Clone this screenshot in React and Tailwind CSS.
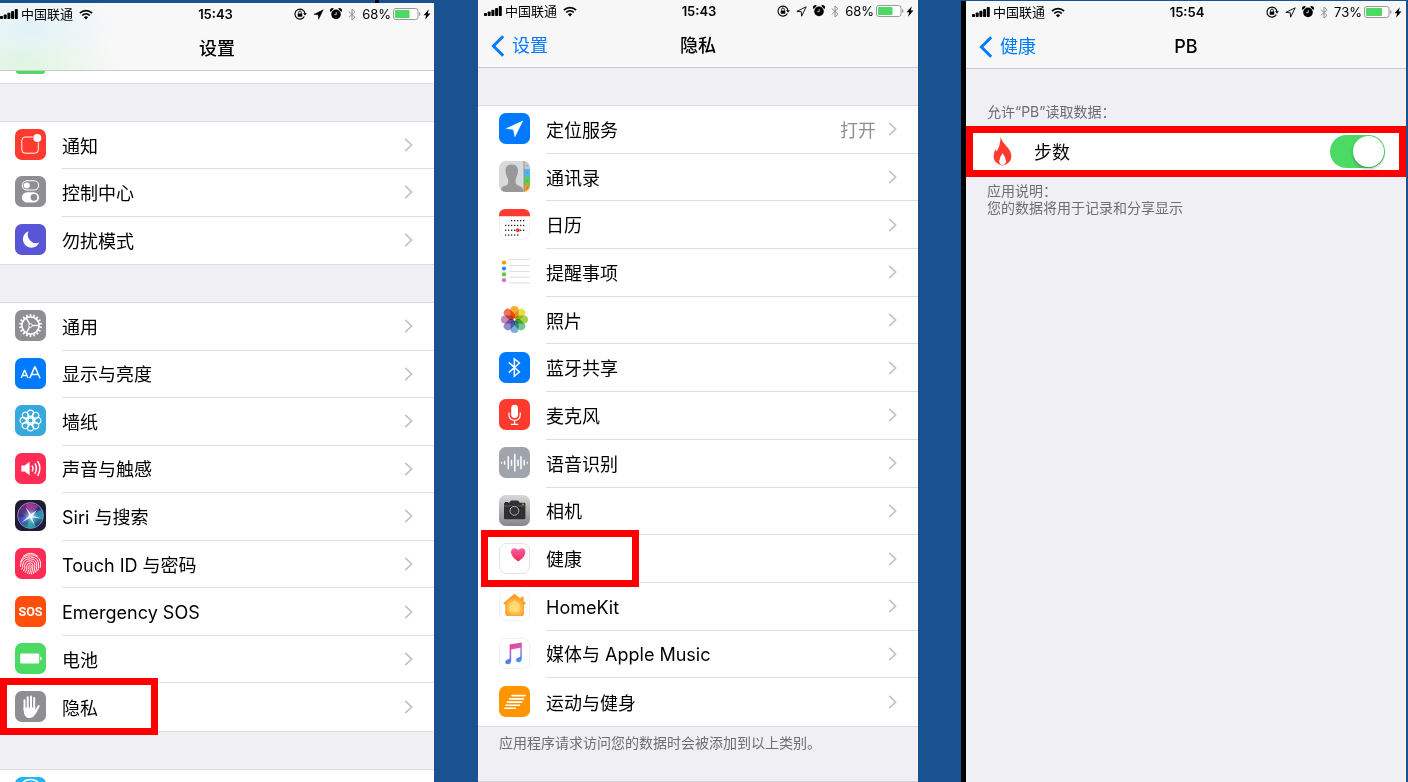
import React from "react";

/* ---------- status bar glyphs ---------- */

const Signal = () => (
  <svg width="18" height="12" viewBox="0 0 18 12" aria-hidden="true">
    <rect x="0" y="8" width="3" height="3" rx="0.8" />
    <rect x="3.7" y="6.5" width="3" height="4.5" rx="0.8" />
    <rect x="7.4" y="4.8" width="3" height="6.2" rx="0.8" />
    <rect x="11.1" y="3" width="3" height="8" rx="0.8" />
    <rect x="14.8" y="1" width="3" height="10" rx="0.8" />
  </svg>
);

const Wifi = () => (
  <svg width="14" height="11" viewBox="0 0 14 11" fill="none" stroke="#000" strokeWidth="1.7" aria-hidden="true">
    <path d="M0.9 4.2C4.4 0.7 9.6 0.7 13.1 4.2" />
    <path d="M3.2 6.5C5.4 4.4 8.6 4.4 10.8 6.5" />
    <path d="M4.9 8.2C6.1 7 7.9 7 9.1 8.2L7 10.4Z" fill="#000" stroke="none" />
  </svg>
);

const RotationLock = () => (
  <svg width="13" height="12" viewBox="0 0 13 12" fill="none" stroke="#000" aria-hidden="true">
    <path d="M10.4 8.6A5 5 0 1 1 11 5.6" strokeWidth="1.1" />
    <path d="M9 5.2H13L11 7.6Z" fill="#000" stroke="none" />
    <rect x="3.7" y="5.4" width="4.6" height="3.3" rx="0.4" fill="#000" stroke="none" />
    <path d="M4.6 5.6V4.4a1.4 1.4 0 0 1 2.8 0V5.6" strokeWidth="0.9" />
  </svg>
);

const StatusArrow = ({ solid }) => (
  <svg width="11" height="11" viewBox="0 0 11 11" aria-hidden="true">
    <path
      d="M10.2 0.8L0.9 5.4L5.3 5.7L5.6 10.2Z"
      fill={solid ? "#000" : "none"}
      stroke="#000"
      strokeWidth={solid ? "0.5" : "0.9"}
      strokeLinejoin="round"
    />
  </svg>
);

const Alarm = () => (
  <svg width="12" height="12" viewBox="0 0 12 12" aria-hidden="true">
    <circle cx="6" cy="6.4" r="4.8" />
    <path d="M0.7 4A2.1 2.1 0 0 1 3.9 0.8ZM11.3 4A2.1 2.1 0 0 0 8.1 0.8Z" />
    <path d="M6.2 4.2V6.7H4.4" stroke="#fff" strokeWidth="0.8" fill="none" />
  </svg>
);

const StatusBluetooth = () => (
  <svg width="8" height="13" viewBox="0 0 8 13" fill="none" stroke="#8e8e93" strokeWidth="1" aria-hidden="true">
    <path d="M0.8 3.6L7 9.3L4 12V1L7 3.7L0.8 9.4" />
  </svg>
);

const Battery = ({ level }) => (
  <svg width="28" height="12" viewBox="0 0 28 12" aria-hidden="true">
    <rect x="0.5" y="0.5" width="24.5" height="11" rx="2.4" fill="#fff" stroke="#8f8f8f" strokeWidth="0.9" />
    <rect x="2" y="2" width={level} height="8" rx="0.8" fill="#4cd964" />
    <path d="M26.2 4V8Q27.5 7.4 27.5 6Q27.5 4.6 26.2 4Z" fill="#8f8f8f" />
  </svg>
);

const Bolt = () => (
  <svg width="8" height="11" viewBox="0 0 8 11" aria-hidden="true">
    <path d="M5.8 0.2L0.6 6.3H3.2L2 10.8L7.5 4.5H4.8Z" />
  </svg>
);

function StatusBar({ time, percent, level, solidArrow, pad }) {
  return (
    <div className={`grid h-[22px] grid-cols-[1fr_auto_1fr] items-center text-[13px] leading-none text-black ${pad}`}>
      <div className="flex items-center whitespace-nowrap">
        <Signal />
        <span className="ml-[3px] mr-[6px]">中国联通</span>
        <Wifi />
      </div>
      <time className="font-semibold">{time}</time>
      <div className="flex items-center justify-end">
        <div className="mr-[6px] flex items-center gap-[6px]">
          <RotationLock />
          <StatusArrow solid={solidArrow} />
          <Alarm />
          <StatusBluetooth />
        </div>
        <span className="mr-[2px]">{percent}</span>
        <Battery level={level} />
        <span className="ml-[2px]">
          <Bolt />
        </span>
      </div>
    </div>
  );
}

function NavBar({ title, back }) {
  return (
    <div className="grid h-[46px] grid-cols-[1fr_auto_1fr] items-center border-b border-[#c9c9ce] pt-0.5 text-[18px]">
      <div className="flex">
        {back && (
          <a href="#back" className="flex items-center gap-[7px] pl-[13px] text-[#007aff]">
            <svg width="14" height="22" viewBox="0 0 14 22" fill="none" stroke="currentColor" strokeWidth="3" aria-hidden="true">
              <path d="M12.2 1.2L2.4 11L12.2 20.8" />
            </svg>
            {back}
          </a>
        )}
      </div>
      <h1 className="font-medium text-black">{title}</h1>
      <div />
    </div>
  );
}

/* ---------- app icons ---------- */

const Tile = ({ fill, stroke, children }) => (
  <svg className="mb-0.5 shrink-0" width="31" height="31" viewBox="0 0 31 31" aria-hidden="true">
    <rect
      x={stroke ? 0.5 : 0}
      y={stroke ? 0.5 : 0}
      width={stroke ? 30 : 31}
      height={stroke ? 30 : 31}
      rx="6.8"
      fill={fill}
      stroke={stroke || "none"}
    />
    {children}
  </svg>
);

const NotificationsIcon = () => (
  <Tile fill="#ff3b30">
    <path d="M17.8 8H10.2Q6.8 8 6.8 11.4V20.8Q6.8 24.2 10.2 24.2H19.9Q23.3 24.2 23.3 20.8V13.4" fill="none" stroke="#fff" strokeWidth="1" />
    <circle cx="22.3" cy="9" r="4" fill="#fff" />
  </Tile>
);

const ControlCenterIcon = () => (
  <Tile fill="#8e8e93">
    <rect x="7.4" y="4.8" width="16.2" height="9.2" rx="4.6" fill="none" stroke="#fff" strokeWidth="1.1" />
    <circle cx="11.8" cy="9.4" r="3" fill="#fff" />
    <rect x="6.9" y="16.2" width="17.2" height="10.4" rx="5.2" fill="#fff" />
    <circle cx="18.9" cy="21.4" r="3.3" fill="#8e8e93" />
  </Tile>
);

const MoonIcon = () => (
  <Tile fill="#5856d6">
    <path d="M13.6 7.2A8.5 8.5 0 1 0 24.2 18.6A8.4 8.4 0 0 1 13.6 7.2Z" fill="#fff" />
  </Tile>
);

const GearIcon = () => (
  <Tile fill="#8e8e93">
    <g fill="none" stroke="#fff">
      <circle cx="15.5" cy="15.5" r="8.6" strokeWidth="1.6" />
      <g strokeWidth="1.7">
        {Array.from({ length: 18 }, (_, i) => (
          <path key={i} d="M15.5 4V6.8" transform={`rotate(${i * 20} 15.5 15.5)`} />
        ))}
      </g>
      <path d="M15.5 15.5H24M15.5 15.5L11.2 8.1M15.5 15.5L11.2 22.9" strokeWidth="1.4" />
      <circle cx="15.5" cy="15.5" r="1.8" strokeWidth="1" fill="#8e8e93" />
    </g>
  </Tile>
);

const DisplayIcon = () => (
  <Tile fill="#007aff">
    <g fill="none" stroke="#fff" strokeLinejoin="bevel">
      <path d="M6.2 20L9.6 12L13 20M7.4 17.5H11.8" strokeWidth="1.4" />
      <path d="M14.7 20.2L19.9 8.6L25.1 20.2M16.5 16.6H23.3" strokeWidth="1.5" />
    </g>
  </Tile>
);

const WallpaperIcon = () => (
  <Tile fill="#37a9dc">
    <g fill="none" stroke="#fff" strokeWidth="1.1">
      {[0, 45, 90, 135, 180, 225, 270, 315].map((a) => (
        <g key={a} transform={`rotate(${a} 15.5 15.5)`}>
          <circle cx="15.5" cy="8.2" r="3.1" />
          <path d="M15.5 12.9L14 10.6M15.5 12.9L17 10.6" />
        </g>
      ))}
      <circle cx="15.5" cy="15.5" r="2.6" />
    </g>
  </Tile>
);

const SoundIcon = () => (
  <Tile fill="#ff2d55">
    <path d="M6.4 12.6H9.6L14.6 8.8V22.2L9.6 18.4H6.4Z" fill="#fff" />
    <g fill="none" stroke="#fff" strokeWidth="1.5">
      <path d="M17.1 12.6Q18.9 15.5 17.1 18.4" />
      <path d="M19.9 10.4Q23 15.5 19.9 20.6" />
      <path d="M22.6 8.2Q27.2 15.5 22.6 22.8" />
    </g>
  </Tile>
);

const SiriIcon = () => (
  <Tile fill="#1d1b36">
    <defs>
      <radialGradient id="siriCore" cx="0.5" cy="0.52" r="0.5">
        <stop offset="0" stopColor="#ffffff" />
        <stop offset="0.2" stopColor="#bfe6ff" stopOpacity="0.8" />
        <stop offset="0.7" stopColor="#4d7fd0" stopOpacity="0.15" />
        <stop offset="1" stopColor="#1d1b36" stopOpacity="0" />
      </radialGradient>
      <linearGradient id="siriBall" x1="0.2" y1="0" x2="0.7" y2="1">
        <stop offset="0" stopColor="#8a2a80" />
        <stop offset="0.45" stopColor="#33307c" />
        <stop offset="0.75" stopColor="#1f7f98" />
        <stop offset="1" stopColor="#1a3568" />
      </linearGradient>
    </defs>
    <circle cx="15.5" cy="15.5" r="12.9" fill="url(#siriBall)" stroke="#a99cc0" strokeWidth="0.8" />
    <path d="M15.5 16L10.5 4.5Q18 3 23 6.2Z" fill="#e0489b" opacity="0.5" />
    <path d="M15.5 16L26.5 9Q29 14 27 19Z" fill="#3ac6d8" opacity="0.5" />
    <path d="M15.5 16L3.5 17.5Q5 23 8.6 25Z" fill="#5a4be0" opacity="0.7" />
    <path d="M15.5 16L12 27.6Q17 29 21 26.5Z" fill="#38d2b6" opacity="0.6" />
    <circle cx="15.5" cy="16" r="12" fill="url(#siriCore)" opacity="0.8" />
    <path d="M14.2 14.9L10.5 7L16 14L22 10L17.6 15.8L26.4 18.4L17 17.6L19.6 25L15 18L6.5 22.5L13.4 16.5Z" fill="#fff" opacity="0.9" />
  </Tile>
);

const TouchIdIcon = () => (
  <Tile fill="#ff2d55">
    <g fill="none" stroke="#fff" strokeWidth="0.95" strokeLinecap="round">
      <path d="M8.2 8.2Q15.5 2 22.8 8.2" />
      <path d="M5.6 13.8Q7.4 7 15.5 6.8Q23.6 7 25.4 13.8Q25.9 16.6 25.2 19.6" />
      <path d="M5.4 18.6Q5.6 8.8 15.5 8.8Q24 9.2 23.7 18Q23.5 20.3 22.8 22.6" />
      <path d="M6.8 21.4Q8.4 19.4 7.7 17Q8.2 10.8 15.5 10.8Q22.2 11.2 21.8 18Q21.5 21.4 20.6 24.2" />
      <path d="M8.6 23Q10.6 19.8 9.8 17.2Q10.4 12.8 15.5 12.8Q20.2 13 19.9 18Q19.6 22 18.5 25.4" />
      <path d="M10.4 24.4Q12.6 21 11.8 17.6Q12.4 14.8 15.5 14.8Q18.3 15 18 18.2Q17.8 22.4 16.3 26" />
      <path d="M12.6 25.4Q14.4 21.6 13.9 18Q14.4 16.6 15.5 16.7Q16.4 17 16.2 18.6Q16 22.4 14.5 25.9" />
    </g>
  </Tile>
);

const SosIcon = () => (
  <Tile fill="#ff4f0a">
    <text
      x="15.5"
      y="20.2"
      textAnchor="middle"
      fill="#fff"
      fontSize="12.5"
      fontWeight="700"
      fontFamily="Roboto, sans-serif"
    >
      SOS
    </text>
  </Tile>
);

const BatteryIcon = () => (
  <Tile fill="#4cd964">
    <rect x="5.2" y="10.4" width="19" height="10.2" rx="1.2" fill="#fff" />
    <path d="M25.1 13.4Q26.8 14 26.8 15.5Q26.8 17 25.1 17.6Z" fill="#fff" />
  </Tile>
);

const HandIcon = () => (
  <Tile fill="#8e8e93">
    <g fill="none" stroke="#fff" strokeLinecap="round">
      <path d="M9.5 9.2V18" strokeWidth="1.9" />
      <path d="M12.7 6.2V17" strokeWidth="2" />
      <path d="M16 5.4V17" strokeWidth="2" />
      <path d="M19.2 7V18" strokeWidth="2" />
      <path d="M23.6 15.2L20.6 20.8" strokeWidth="2.1" />
    </g>
    <path d="M8.5 16.4H20.2L20.4 18.6L22.4 19Q21 22.6 19.4 24.6Q18 27 14.8 27Q10.8 27 9.4 23.4Q8.5 20.6 8.5 16.4Z" fill="#fff" />
  </Tile>
);

const AppStoreIcon = () => (
  <Tile fill="#1fb6f5">
    <circle cx="15.5" cy="14.5" r="12" fill="none" stroke="#fff" strokeWidth="1.4" />
    <path d="M17 7L10 20M14 7L21 20M8 17H23" stroke="#fff" strokeWidth="1.8" />
  </Tile>
);

const LocationIcon = () => (
  <Tile fill="#007aff">
    <path d="M24.2 7.6L6.6 15.6L14.2 16.8L15.8 24.6Z" fill="#fff" />
  </Tile>
);

const ContactsIcon = () => (
  <Tile fill="#d9d9db">
    <defs>
      <clipPath id="contactsClip">
        <rect width="31" height="31" rx="6.8" />
      </clipPath>
    </defs>
    <g clipPath="url(#contactsClip)">
      <path d="M12.8 3.4Q18.6 3.4 19 9Q19.2 13 17.4 16.2Q16.2 18.4 16.8 22.4Q17.6 24.2 21 25.2Q24 26 24.4 31H1.6Q1.8 26.4 4.6 25.2Q8.6 24.2 9.2 22.2Q9.6 18.4 8.2 16.2Q6.4 13 6.5 9Q6.8 3.4 12.8 3.4Z" fill="#98989a" />
      <rect x="25" y="0" width="6" height="8" fill="#c9c9cc" />
      <rect x="25" y="8" width="6" height="8" fill="#50b4f2" />
      <rect x="25" y="16" width="6" height="8" fill="#5fce4f" />
      <rect x="25" y="24" width="6" height="7" fill="#f8961f" />
      <path d="M25 0V31" stroke="#8a8a8d" strokeWidth="0.8" />
      <path d="M28 4.4V5.4M28 11.4V12.4M28 19.4V20.4M28 26.4V27.4" stroke="#6a6a6c" strokeWidth="1" />
    </g>
  </Tile>
);

const calendarRows = [
  [12, 15, 18, 21, 24],
  [6, 9, 12, 15, 18, 21, 24],
  [6, 9, 12, 15, 18, 21, 24],
  [6, 9, 12, 15, 18],
];

const CalendarIcon = () => (
  <Tile fill="#fff" stroke="#f2f2f2">
    <path d="M0 7.2V6.8Q0 0 6.8 0H24.2Q31 0 31 6.8V7.2Z" fill="#ff3b30" />
    {calendarRows.map((xs, r) =>
      xs.map((x) => <rect key={`${r}-${x}`} x={x} y={11 + r * 4.8} width="1.3" height="1.3" fill="#222" />)
    )}
    <circle cx="18.8" cy="21.2" r="2" fill="#ff3b30" />
  </Tile>
);

const RemindersIcon = () => (
  <Tile fill="#fff">
    <path d="M10 3.5H31M10 9.5H31M10 15.4H31M10 21.2H31M10 27H31" stroke="#d5d5d7" strokeWidth="0.8" />
    <circle cx="5" cy="6.6" r="2.1" fill="#ff9500" />
    <circle cx="5" cy="12.5" r="2.1" fill="#1d8cf5" />
    <circle cx="5" cy="18.4" r="2.1" fill="#5ecb2f" />
    <circle cx="5" cy="24.2" r="2.1" fill="#cb73e1" />
  </Tile>
);

const petals = ["#f8a01c", "#e4dc30", "#9ccb3b", "#5fbf86", "#6aa5dc", "#8d7cc4", "#c07ab8", "#f0603f"];

const PhotosIcon = () => (
  <Tile fill="#fff">
    <g className="isolate">
      {petals.map((c, i) => (
        <rect
          key={c}
          className="mix-blend-multiply"
          x="11.4"
          y="2"
          width="8.2"
          height="12.6"
          rx="4.1"
          fill={c}
          fillOpacity="0.9"
          transform={`rotate(${i * 45} 15.5 15.5)`}
        />
      ))}
    </g>
  </Tile>
);

const BluetoothIcon = () => (
  <Tile fill="#007aff">
    <path d="M9.8 10.4L20.4 20L15.3 24.2V6.8L20.4 11L9.8 20.6" fill="none" stroke="#fff" strokeWidth="1.5" />
  </Tile>
);

const MicIcon = () => (
  <Tile fill="#ff3b30">
    <rect x="12.2" y="5.8" width="6.8" height="13.2" rx="3.4" fill="#fff" />
    <path d="M10 13.6V16Q10.2 21.2 15.6 21.4Q21 21.2 21.2 16V13.6M15.6 21.4V25M12 25.3H19.2" fill="none" stroke="#fff" strokeWidth="1.2" />
  </Tile>
);

const SpeechIcon = () => (
  <Tile fill="#9fa4ad">
    <path
      d="M2.6 15.6V16M5.6 14.6V17M9.3 9.8V21.8M12.5 13.4V18.2M15.8 7.6V24M19 13.2V18.4M22 9.8V21.8M25.2 13.6V18M28.4 15.6V16"
      stroke="#fff"
      strokeWidth="1.5"
      strokeLinecap="round"
    />
  </Tile>
);

const CameraIcon = () => (
  <Tile fill="url(#cameraBg)">
    <defs>
      <linearGradient id="cameraBg" x1="0" y1="0" x2="0" y2="1">
        <stop offset="0" stopColor="#d8d8da" />
        <stop offset="1" stopColor="#86878b" />
      </linearGradient>
    </defs>
    <path d="M5 8.6Q5 7.8 6 7.8V7H9V7.8H10.2L11.8 5.8Q12 5.4 12.8 5.4H18.2Q19 5.4 19.3 5.8L20.8 7.8H25Q26.4 7.8 26.4 9.2V23Q26.4 24.2 25 24.2H6.2Q5 24.2 5 23Z" fill="#303033" />
    <path d="M5 11H26.4" stroke="#77777a" strokeWidth="0.7" />
    <circle cx="15.4" cy="15.8" r="5.8" fill="#1f1f21" />
    <circle cx="15.4" cy="15.8" r="4.5" fill="#343438" stroke="#b9b9bc" strokeWidth="1" />
    <circle cx="24" cy="9.4" r="0.8" fill="#f4b41c" />
  </Tile>
);

const HealthIcon = () => (
  <Tile fill="#fff" stroke="#e2e2e4">
    <defs>
      <linearGradient id="heart" x1="0" y1="0" x2="0" y2="1">
        <stop offset="0" stopColor="#fb5fa8" />
        <stop offset="1" stopColor="#f02a50" />
      </linearGradient>
    </defs>
    <path d="M19.2 18.6Q12 13.6 12 9.2Q12.2 5.4 15.6 5.2Q18.2 5.2 19.2 7.2Q20.2 5.2 22.8 5.2Q26.2 5.4 26.4 9.2Q26.4 13.6 19.2 18.6Z" fill="url(#heart)" />
  </Tile>
);

const HomeIcon = () => (
  <Tile fill="#fff" stroke="#f2f2f3">
    <defs>
      <radialGradient id="house" cx="0.5" cy="0.65" r="0.6">
        <stop offset="0" stopColor="#ffe27a" />
        <stop offset="1" stopColor="#fb9416" />
      </radialGradient>
    </defs>
    <path d="M15.5 4.2L4.6 13.2L5.6 14.2L6.8 13.4V24.4Q6.8 25.4 7.8 25.4H23.4Q24.4 25.4 24.4 24.4V13.4L25.6 14.2L26.6 13.2L24.2 11.2V7.2H22.2V9.6Z" fill="url(#house)" stroke="#f08c12" strokeWidth="0.7" />
    <path d="M15.5 10L10.4 14.2V21.8H20.6V14.2Z" fill="#ffdf77" opacity="0.7" />
  </Tile>
);

const MusicIcon = () => (
  <Tile fill="#fff" stroke="#f0f0f2">
    <defs>
      <linearGradient id="note" x1="0.3" y1="0" x2="0.6" y2="1">
        <stop offset="0" stopColor="#fa3c66" />
        <stop offset="0.4" stopColor="#c95ad6" />
        <stop offset="0.75" stopColor="#5f74f2" />
        <stop offset="1" stopColor="#35a5f5" />
      </linearGradient>
    </defs>
    <path
      fillRule="evenodd"
      d="M10.6 6.6L22.8 4.6V20.4Q22.8 24 19.6 24.2Q17 24.2 17 22.2Q17 20.2 19.4 19.6Q21.4 19.2 21.4 18V9.8L12.2 11.4V22.4Q12.2 26 8.8 26.2Q6.2 26.2 6.2 24.2Q6.2 22.2 8.6 21.6Q10.6 21.2 10.6 20Z"
      fill="url(#note)"
    />
  </Tile>
);

const FitnessIcon = () => (
  <Tile fill="#ff9500">
    <path
      d="M13 9.6H26M10.6 12.9H24.6M8.4 16.1H22.8M7 19.3H20.6M5.8 22.3H16.4"
      stroke="#fff"
      strokeWidth="1.6"
      strokeLinecap="round"
    />
  </Tile>
);

/* ---------- list ---------- */

const Highlight = ({ className }) => (
  <span className={`pointer-events-none absolute -bottom-[4px] -top-[5px] w-[158px] border-[7px] border-[#fe0000] ${className}`} />
);

function SettingsList({ items, className, rowPad, boxPos }) {
  return (
    <ul className={`grid shrink-0 auto-rows-fr border-y border-[#dcdce0] bg-white ${className}`}>
      {items.map(({ icon: Icon, label, value, marked }, i) => (
        <li key={label} className="relative">
          <a href="#item" className={`flex h-full items-center gap-4 ${rowPad}`}>
            <Icon />
            <span
              className={`flex h-full flex-1 items-center pr-[21px] text-[18px] text-black ${
                i < items.length - 1 ? "border-b border-[#dedee1]" : ""
              }`}
            >
              <span className="flex-1 pt-0.5">{label}</span>
              {value && <span className="mr-[12px] pt-0.5 text-[#8e8e93]">{value}</span>}
              <svg width="9" height="14" viewBox="0 0 9 14" fill="none" stroke="#c2c2c7" strokeWidth="1.7" aria-hidden="true">
                <path d="M1.2 0.8L7.6 7L1.2 13.2" />
              </svg>
            </span>
          </a>
          {marked && <Highlight className={boxPos} />}
        </li>
      ))}
    </ul>
  );
}

const alerts = [
  { icon: NotificationsIcon, label: "通知" },
  { icon: ControlCenterIcon, label: "控制中心" },
  { icon: MoonIcon, label: "勿扰模式" },
];

const general = [
  { icon: GearIcon, label: "通用" },
  { icon: DisplayIcon, label: "显示与亮度" },
  { icon: WallpaperIcon, label: "墙纸" },
  { icon: SoundIcon, label: "声音与触感" },
  { icon: SiriIcon, label: "Siri 与搜索" },
  { icon: TouchIdIcon, label: "Touch ID 与密码" },
  { icon: SosIcon, label: "Emergency SOS" },
  { icon: BatteryIcon, label: "电池" },
  { icon: HandIcon, label: "隐私", marked: true },
];

const privacy = [
  { icon: LocationIcon, label: "定位服务", value: "打开" },
  { icon: ContactsIcon, label: "通讯录" },
  { icon: CalendarIcon, label: "日历" },
  { icon: RemindersIcon, label: "提醒事项" },
  { icon: PhotosIcon, label: "照片" },
  { icon: BluetoothIcon, label: "蓝牙共享" },
  { icon: MicIcon, label: "麦克风" },
  { icon: SpeechIcon, label: "语音识别" },
  { icon: CameraIcon, label: "相机" },
  { icon: HealthIcon, label: "健康", marked: true },
  { icon: HomeIcon, label: "HomeKit" },
  { icon: MusicIcon, label: "媒体与 Apple Music" },
  { icon: FitnessIcon, label: "运动与健身" },
];

/* ---------- screens ---------- */

function SettingsScreen() {
  return (
    <div className="flex flex-col overflow-hidden pr-px">
      <div className="flex h-[3px] shrink-0 justify-end pr-[55px]">
        <span className="w-1 bg-black" />
      </div>
      <section className="flex flex-1 flex-col overflow-hidden bg-[#efeff4]">
        <header className="shrink-0 bg-[#f8f8f8] bg-[radial-gradient(ellipse_90px_36px_at_30px_24px,#e2f2f8,transparent),radial-gradient(ellipse_100px_44px_at_20px_60px,#def5e0,transparent)]">
          <StatusBar time="15:43" percent="68%" level="14.5" solidArrow pad="pr-[3px]" />
          <NavBar title="设置" />
        </header>
        <div className="h-[13px] shrink-0 border-b border-[#dcdce0] bg-white pl-4">
          <div className="h-[3px] w-[29px] rounded-b-full bg-[#4cd964]" />
        </div>
        <div className="flex flex-col gap-[37px] pt-[37px]">
          <SettingsList items={alerts} className="h-[144px]" rowPad="pl-[15px]" />
          <SettingsList items={general} className="h-[430px]" rowPad="pl-[15px]" boxPos="left-0" />
          <div className="flex h-[48px] items-center border-t border-[#dcdce0] bg-white pl-[15px]">
            <AppStoreIcon />
          </div>
        </div>
      </section>
    </div>
  );
}

function PrivacyScreen() {
  return (
    <section className="flex flex-col overflow-hidden border-b border-[#d4d4da] bg-[#efeff4]">
      <header className="shrink-0 bg-[#f7f7f8]">
        <StatusBar time="15:43" percent="68%" level="14.5" pad="pl-[6px] pr-[4px]" />
        <NavBar title="隐私" back="设置" />
      </header>
      <div className="pt-[37px]">
        <SettingsList items={privacy} className="h-[622px]" rowPad="pl-[21px]" boxPos="left-[3px]" />
        <p className="px-[21px] pt-[7px] text-[14px] leading-[17px] text-[#6d6d72]">应用程序请求访问您的数据时会被添加到以上类别。</p>
      </div>
    </section>
  );
}

function HealthAccessScreen() {
  return (
    <div className="flex flex-col overflow-hidden pr-0.5 pt-px">
      <section className="flex-1 border-l-[5px] border-black bg-[#efeff4]">
        <header className="bg-[#f7f7f8]">
          <StatusBar time="15:54" percent="73%" level="16" pad="pl-[6px] pr-[4px]" />
          <NavBar title="PB" back="健康" />
        </header>
        <p className="px-[21px] pb-[6px] pt-[34px] text-[14px] leading-[17px] text-[#6d6d72]">允许“PB”读取数据：</p>
        <label className="flex h-[51px] items-center border-[7px] border-[#fe0000] bg-white pl-[20px] pr-[14px] text-[18px] text-black">
          <svg className="mr-[22px]" width="19" height="29" viewBox="0 0 19 29" aria-hidden="true">
            <path
              fillRule="evenodd"
              d="M7.6 0.3Q8.6 4.4 13 8.8Q18.4 14 18.4 19.6Q18.2 26.6 9.6 28.8Q0.8 26.8 0.6 19.6Q0.6 16 2.4 12.4L3.8 14.4Q7.4 8 7.6 0.3ZM9.6 16.2Q6.2 20.4 6.2 24.2Q6.4 27.4 9.6 28.2Q12.8 27.4 13 24.2Q13 20.4 9.6 16.2Z"
              fill="#ff3b30"
            />
          </svg>
          <span className="flex-1 pt-0.5">步数</span>
          <input
            type="checkbox"
            role="switch"
            defaultChecked
            className="flex h-[33px] w-[55px] appearance-none items-center rounded-full bg-[#4cd964] p-px before:ml-auto before:block before:size-[31px] before:rounded-full before:bg-white before:shadow-[0_2px_3px_rgba(0,0,0,0.25)] before:content-['']"
          />
        </label>
        <p className="px-[21px] pt-[5px] text-[14px] leading-[17px] text-[#6d6d72]">
          应用说明：
          <br />
          您的数据将用于记录和分享显示
        </p>
      </section>
    </div>
  );
}

export default function App() {
  return (
    <main
      lang="zh-CN"
      className="grid h-screen grid-cols-[435fr_440fr_447fr] grid-rows-[100%] gap-x-[43px] overflow-hidden bg-[#1a5191] font-['Inter','Noto_Sans_CJK_SC',sans-serif]"
    >
      <SettingsScreen />
      <PrivacyScreen />
      <HealthAccessScreen />
    </main>
  );
}
